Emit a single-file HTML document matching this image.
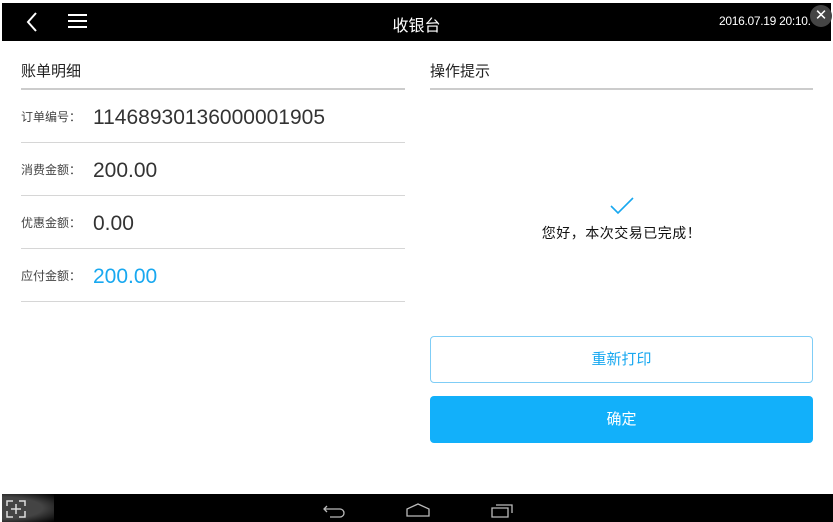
<!DOCTYPE html>
<html><head><meta charset="utf-8"><style>
*{margin:0;padding:0;box-sizing:border-box}
body{width:833px;height:522px;background:#fff;position:relative;overflow:hidden;font-family:"Liberation Sans","Noto Sans CJK SC",sans-serif}
.a{position:absolute}
.top{left:2px;top:3px;width:829px;height:38px;background:#000}
.line{height:1px;background:#d6d6d6}
.lbl{font-size:12px;color:#444}
.val{font-size:21px;color:#333}
</style></head><body>
<div class="a top"></div>
<svg class="a" style="left:22px;top:10px" width="20" height="24"><path d="M14 3 L6 12 L14 21" stroke="#fff" stroke-width="2" fill="none"/></svg>
<svg class="a" style="left:67px;top:13px" width="22" height="16"><path d="M1 2H20M1 8H20M1 14H20" stroke="#fff" stroke-width="2"/></svg>
<div class="a" style="left:0;width:833px;top:12px;text-align:center;color:#fff;font-size:16px">收银台</div>
<div class="a" style="left:719px;top:14px;color:#fff;font-size:12px;letter-spacing:-0.3px">2016.07.19 20:10.</div>
<div class="a" style="left:810px;top:5px;width:22px;height:22px;border-radius:11px;background:#444;color:#fff;font-size:15px;text-align:center;line-height:22px">✕</div>

<div class="a" style="left:21px;top:60px;font-size:15px;color:#222">账单明细</div>
<div class="a line" style="left:21px;top:88px;width:384px;background:#ccc;height:2px"></div>
<div class="a" style="left:430px;top:60px;font-size:15px;color:#222">操作提示</div>
<div class="a line" style="left:430px;top:88px;width:383px;background:#ccc;height:2px"></div>

<div class="a lbl" style="left:21px;top:108px">订单编号：</div><div class="a val" style="left:93px;top:106px">1146893013600000190​5</div>
<div class="a line" style="left:21px;top:142px;width:384px"></div>
<div class="a lbl" style="left:21px;top:161px">消费金额：</div><div class="a val" style="left:93px;top:159px">200.00</div>
<div class="a line" style="left:21px;top:195px;width:384px"></div>
<div class="a lbl" style="left:21px;top:214px">优惠金额：</div><div class="a val" style="left:93px;top:212px">0.00</div>
<div class="a line" style="left:21px;top:248px;width:384px"></div>
<div class="a lbl" style="left:21px;top:267px">应付金额：</div><div class="a val" style="left:93px;top:265px;color:#18a8f0">200.00</div>
<div class="a line" style="left:21px;top:301px;width:384px"></div>

<svg class="a" style="left:609px;top:196px" width="26" height="20"><path d="M2 10 L9 17 L24 2" stroke="#18a8f0" stroke-width="1.6" fill="none"/></svg>
<div class="a" style="left:430px;width:383px;top:223px;text-align:center;font-size:14px;color:#111;letter-spacing:0.5px">您好，本次交易已完成！</div>

<div class="a" style="left:430px;top:336px;width:383px;height:47px;border:1px solid #7fcdf6;border-radius:4px;text-align:center;line-height:45px;color:#18a8f0;font-size:15px">重新打印</div>
<div class="a" style="left:430px;top:396px;width:383px;height:47px;background:#12b0fa;border-radius:4px;text-align:center;line-height:47px;color:#fff;font-size:15px">确定</div>

<div class="a" style="left:2px;top:494px;width:831px;height:28px;background:#000"></div>
<div class="a" style="left:2px;top:494px;width:52px;height:28px;background:radial-gradient(ellipse at left,#444 55%,#000 100%)"></div>
<svg class="a" style="left:6px;top:500px" width="22" height="18"><g stroke="#ddd" stroke-width="1.5" fill="none"><path d="M1 6V1H7M13 1H19V6M1 11V17H7M13 17H19V11M10 4V14M5 9H15"/></g></svg>
<svg class="a" style="left:322px;top:502px" width="26" height="16"><path d="M5 4 L2 7 L5 10 M2 7 H18 A4 4 0 0 1 18 15 H8" stroke="#bbb" stroke-width="1.3" fill="none"/></svg>
<svg class="a" style="left:404px;top:502px" width="28" height="16"><path d="M3 14 V7 L14 2 L25 7 V14 Z" stroke="#bbb" stroke-width="1.3" fill="none"/></svg>
<svg class="a" style="left:489px;top:502px" width="26" height="16"><path d="M3 6 H19 V15 H3 Z M7 3 H23 V11" stroke="#bbb" stroke-width="1.3" fill="none"/></svg>
</body></html>
